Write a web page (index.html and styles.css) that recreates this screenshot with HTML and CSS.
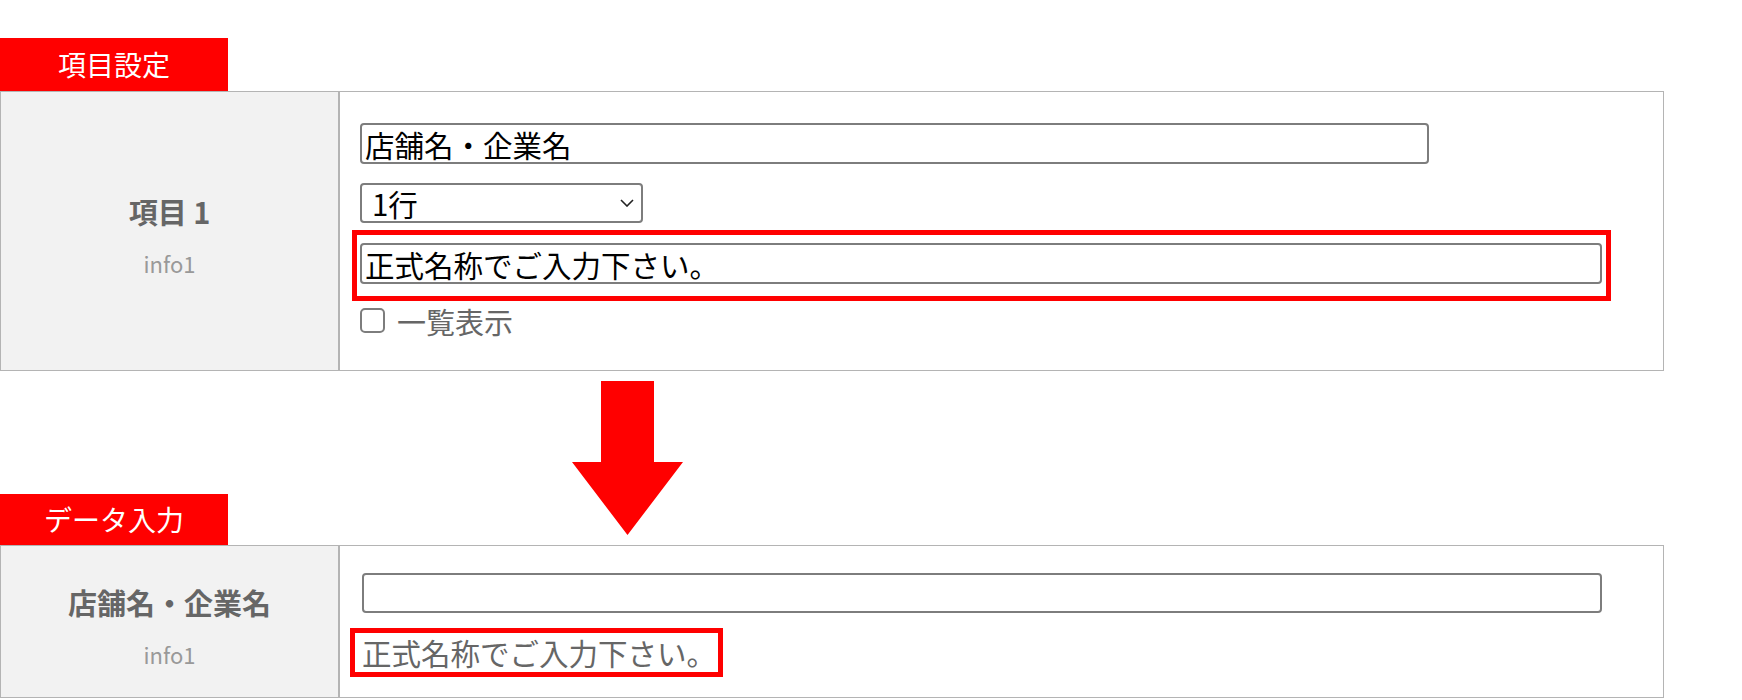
FILE: index.html
```html
<!DOCTYPE html>
<html lang="ja">
<head>
  <meta charset="UTF-8">
  <meta name="viewport" content="width=device-width, initial-scale=1.0">
  <title>項目設定とデータ入力</title>
  <link rel="stylesheet" href="styles.css">
</head>
<body>
  <div class="page">
    <!-- 項目設定 -->
    <div class="tab">項目設定</div>
    <div class="row">
      <div class="head">
        <div class="head-name">項目 1</div>
        <div class="head-key">info1</div>
      </div>
      <div class="body body-setting">
        <input class="field field-name" type="text" value="店舗名・企業名">
        <div class="select-wrap">
          <select class="field field-select">
            <option>1行</option>
            <option>複数行</option>
          </select>
          <svg class="chevron" width="14" height="8" viewBox="0 0 14 8">
            <polyline points="1,1 7,7 13,1" fill="none" stroke="#222" stroke-width="1.6"/>
          </svg>
        </div>
        <div class="mark mark-field">
          <input class="field field-note" type="text" value="正式名称でご入力下さい。">
        </div>
        <label class="check">
          <input type="checkbox">
          <span>一覧表示</span>
        </label>
      </div>
    </div>

    <!-- 矢印 + データ入力 -->
    <div class="between">
      <div class="tab">データ入力</div>
      <svg class="arrow" width="111" height="154" viewBox="0 0 111 154">
        <polygon points="29,0 82,0 82,81 111,81 55.5,154 0,81 29,81" fill="#ff0000"/>
      </svg>
    </div>
    <div class="row">
      <div class="head">
        <div class="head-name">店舗名・企業名</div>
        <div class="head-key">info1</div>
      </div>
      <div class="body body-entry">
        <input class="field field-entry" type="text" value="">
        <div class="mark mark-text">正式名称でご入力下さい。</div>
      </div>
    </div>
  </div>
</body>
</html>
```

FILE: styles.css
```css
/* 全体 */
body {
  margin: 0;
  font-family: "Noto Sans CJK JP", "Noto Sans", sans-serif;
  color: #333;
  background: #fff;
}

.page {
  padding-top: 38px;
}

/* 赤いタブ */
.tab {
  width: 228px;
  height: 53px;
  line-height: 53px;
  background: #ff0000;
  color: #fff;
  font-size: 28px;
  text-align: center;
}

/* 表 */
.row {
  width: 1664px;
  box-sizing: border-box;
  border: 1px solid #b4b4b4;
  display: grid;
  grid-template-columns: 339px 1fr;
}

.head {
  background: #f2f2f2;
  border-right: 2px solid #b4b4b4;
  display: flex;
  flex-direction: column;
  justify-content: center;
  align-items: center;
  gap: 12px;
  padding-top: 12px;
}

.head-name {
  font-size: 29px;
  line-height: 40px;
  font-weight: bold;
  color: #666;
}

.head-key {
  font-size: 22px;
  line-height: 40px;
  color: #999;
}

.body {
  display: flex;
  flex-direction: column;
  align-items: flex-start;
}

.body-setting {
  padding: 31px 20px 37px 20px;
}

.body-entry {
  padding: 27px 22px 20px 22px;
}

/* 入力欄 */
.field {
  font-family: inherit;
  font-size: 29.5px;
  color: #000;
  box-sizing: border-box;
  border: 2px solid #7d7d7d;
  border-radius: 4px;
  background: #fff;
  margin: 0;
  outline: none;
}

input.field {
  height: 41px;
  line-height: 35px;
  padding: 0 3px;
}

.field-name {
  width: 1069px;
}

.field-note {
  width: 1242px;
}

.field-entry {
  width: 1240px;
  height: 40px !important;
}

.select-wrap {
  position: relative;
  margin-top: 19px;
}

.field-select {
  -webkit-appearance: none;
  appearance: none;
  width: 283px;
  height: 40px;
  line-height: 36px;
  padding: 0 30px 0 10px;
}

.chevron {
  position: absolute;
  right: 9px;
  top: 16px;
  pointer-events: none;
}

/* 赤枠 */
.mark {
  border: 5px solid #ff0000;
  box-sizing: border-box;
}

.mark-field {
  width: 1259px;
  margin: 7px 0 0 -8px;
  padding: 8px 4px 12px 3px;
}

.mark-text {
  width: 373px;
  margin: 15px 0 0 -12px;
  padding: 0 0 0 7px;
  font-size: 29.5px;
  line-height: 39px;
  color: #666;
  white-space: nowrap;
}

/* チェックボックス */
.check {
  display: flex;
  align-items: center;
  margin-top: 7px;
  height: 25px;
  font-size: 29px;
  color: #666;
}

.check input {
  -webkit-appearance: none;
  appearance: none;
  width: 25px;
  height: 25px;
  margin: 0 12px 0 0;
  border: 2px solid #7d7d7d;
  border-radius: 5px;
  background: #fff;
}

/* 矢印 */
.between {
  display: flex;
  align-items: flex-end;
  padding-top: 10px;
}

.between .tab {
  height: 51px;
  line-height: 51px;
}

.arrow {
  display: block;
  margin: 0 0 10px 344px;
}
```
